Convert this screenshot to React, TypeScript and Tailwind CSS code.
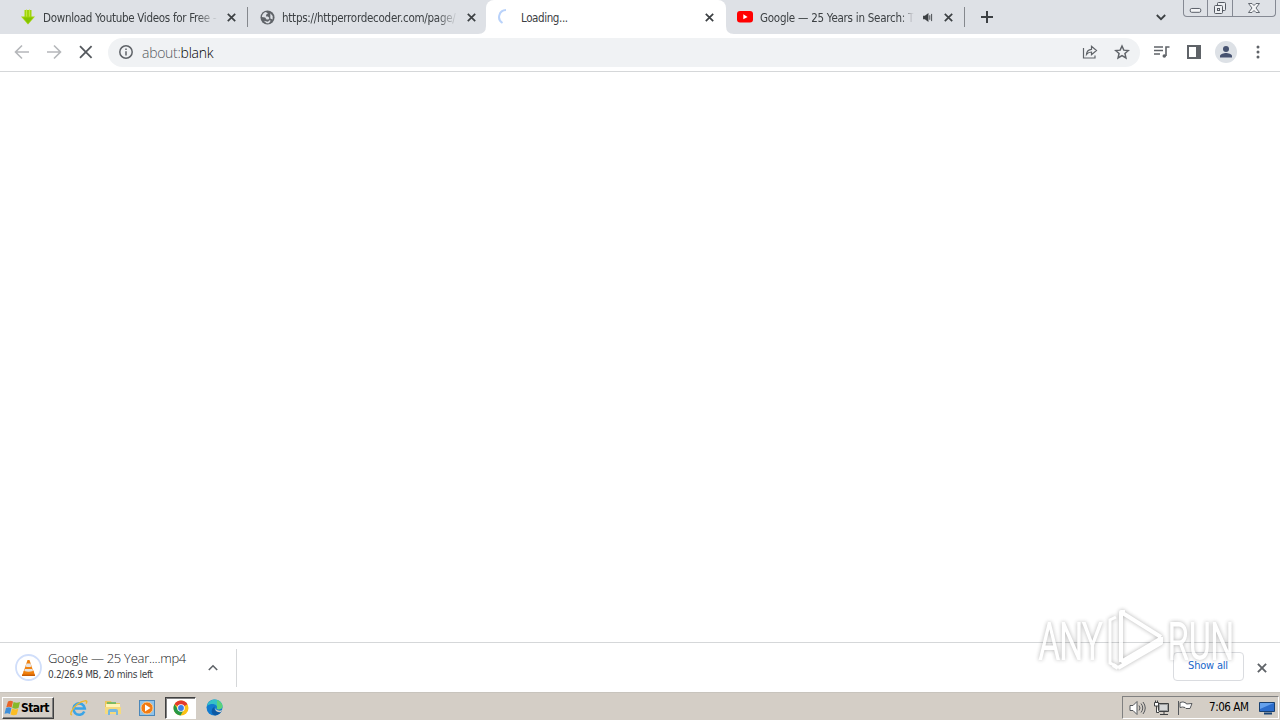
import { PropsWithChildren, ReactNode } from 'react';

const CloseIcon = ({ className = '' }: { className?: string }) => (
    <svg className={`h-[9px] w-[9px] shrink-0 ${className}`} viewBox="0 0 9 9" fill="none" stroke="currentColor" strokeWidth="1.7">
        <path d="M.8.8l7.4 7.4M8.2.8L.8 8.2" />
    </svg>
);

const Tab = ({ icon, title, titleClass, children }: PropsWithChildren<{ icon: ReactNode; title: string; titleClass: string }>) => (
    <>
        <span className="flex w-4 shrink-0 items-center justify-center">{icon}</span>
        <span className={`ml-[7px] shrink-0 whitespace-nowrap pt-px text-[11.5px] leading-4 ${titleClass}`}>{title}</span>
        {children}
    </>
);

const fade = '[mask-image:linear-gradient(to_right,black_88%,transparent)]';

function TabStrip() {
    return (
        <div className="flex h-[34px] bg-[#dee1e6] text-[#3c4043]">
            <div className="flex w-[486px] items-center">
                <div className="flex h-full w-[247px] items-center pl-5">
                    <Tab
                        title="Download Youtube Videos for Free -"
                        titleClass={`w-[175px] tracking-[-0.29px] ${fade}`}
                        icon={
                            <svg width="16" height="16" viewBox="0 0 16 16">
                                <path d="M4.500 1v6.500H1L8 15.500l7-8h-3.500V1z" fill="#a1d50b" />
                                <path d="M3 8.500h10l-5 6z" fill="#84c400" />
                                <path d="M6.500 .500v7M9.500 .500v7" stroke="#c0e83f" />
                            </svg>
                        }
                    >
                        <CloseIcon className="ml-[9px]" />
                    </Tab>
                </div>
                <span className="h-5 w-px bg-[#85888d]" />
                <div className="flex h-full flex-1 items-center pl-[11px]">
                    <Tab
                        title="https://httperrordecoder.com/page/"
                        titleClass={`w-[176px] tracking-[-0.26px] ${fade}`}
                        icon={
                            <svg width="15" height="15" viewBox="0 0 16 16">
                                <circle cx="8" cy="8" r="7.5" fill="#5f6368" />
                                <path d="M6 2.200C3.500 3 2.200 5 2 7.500L5.500 8l1.500 2h2l1-1.500L8.500 7H6.500V5L8.500 3.500zM11 3.500l2.500 3v3.500L11 9z" fill="#dee1e6" />
                                <path d="M4 11.500l4.500 1 1.500-1.500 1.500.5L9.500 14H7z" fill="#dee1e6" />
                            </svg>
                        }
                    >
                        <CloseIcon className="ml-[9px]" />
                    </Tab>
                </div>
            </div>
            <div className="relative flex w-[240px] items-center rounded-t-lg bg-white pl-3">
                <svg className="absolute bottom-0 -left-2" width="8" height="8" viewBox="0 0 8 8">
                    <path d="M8 0v8H0q8 0 8-8" fill="#fff" />
                </svg>
                <svg className="absolute -right-2 bottom-0" width="8" height="8" viewBox="0 0 8 8">
                    <path d="M0 0v8h8q-8 0-8-8" fill="#fff" />
                </svg>
                <Tab
                    title="Loading..."
                    titleClass="w-[175px] tracking-[-0.4px]"
                    icon={
                        <svg width="16" height="16" viewBox="0 0 16 16" fill="none" stroke="#b9d2fa" strokeWidth="2">
                            <path d="M8 1a7 7 0 0 0-3.5 13" />
                        </svg>
                    }
                >
                    <CloseIcon className="ml-[9px]" />
                </Tab>
            </div>
            <div className="flex w-[238px] items-center pl-[11px]">
                <Tab
                    title="Google — 25 Years in Search: Th"
                    titleClass={`w-[157px] tracking-[-0.25px] [mask-image:linear-gradient(to_right,black_90%,transparent_98%)]`}
                    icon={
                        <svg width="16" height="12" viewBox="0 0 16 12">
                            <rect width="16" height="11.5" rx="3" fill="#f00" />
                            <path d="M6.3 3.3v5L10.6 6z" fill="#fff" />
                        </svg>
                    }
                >
                    <svg className="ml-[6px] shrink-0" width="10" height="9" viewBox="0 0 11 10">
                        <path d="M0 3h2l4-3v10L2 7H0z" fill="#3c4043" />
                        <path d="M7.5 2.5v5M9.5 1v8" stroke="#3c4043" />
                    </svg>
                    <CloseIcon className="ml-[11px]" />
                </Tab>
            </div>
            <div className="flex items-center">
                <span className="h-5 w-px bg-[#85888d]" />
                <svg className="ml-4" width="12" height="12" viewBox="0 0 12 12" stroke="#3c4043" strokeWidth="2">
                    <path d="M6 0v12M0 6h12" />
                </svg>
            </div>
            <div className="ml-auto flex pr-1">
                <svg className="mt-[14px] mr-[17px]" width="10" height="7" viewBox="0 0 10 7" fill="none" stroke="#3c4043" strokeWidth="1.8">
                    <path d="M.8 1L5 5.2 9.2 1" />
                </svg>
                <div className="flex h-[17px] w-[93px] rounded-b-[4px] border border-t-0 border-[#858993] text-[#555a63]">
                    <span className="flex w-6 justify-center border-r border-[#858993]">
                        <svg width="24" height="16" viewBox="0 0 24 16" fill="#f3f4f6" stroke="currentColor">
                            <rect x="6.5" y="8.5" width="11" height="4" rx="1.5" />
                        </svg>
                    </span>
                    <span className="flex w-[25px] justify-center border-r border-[#858993]">
                        <svg width="24" height="16" viewBox="0 0 24 16" fill="#eceef1" stroke="currentColor">
                            <rect x="9.5" y="2.5" width="8" height="8" rx="1" />
                            <rect x="6.5" y="5.5" width="8" height="8" rx="1" />
                            <rect x="9.5" y="8.5" width="2" height="2" />
                        </svg>
                    </span>
                    <span className="flex flex-1 justify-center">
                        <svg width="14" height="16" viewBox="0 0 14 16" fill="#f3f4f6" stroke="currentColor" strokeWidth=".9">
                            <path d="M1.500 3.500H5l2 2 2-2h3.500L9 8l3.500 4.500H9l-2-2-2 2H1.500L5 8z" />
                        </svg>
                    </span>
                </div>
            </div>
        </div>
    );
}

function Toolbar() {
    return (
        <div className="flex h-[38px] items-center border-b border-[#d5d7d9] bg-white text-[#5f6368]">
            <svg className="mb-[2px] ml-[14px]" width="80" height="16" viewBox="0 0 80 16" fill="none" strokeWidth="1.6">
                <path d="M15 8H2M8 1.500L1.500 8 8 14.500M33 8h13M40 1.500L46.500 8 40 14.500" stroke="#b5b7ba" />
                <path d="M66 2.200L77.600 13.800M77.600 2.200L66 13.800" stroke="#55595e" strokeWidth="1.800" />
            </svg>
            <div className="ml-[14px] flex h-[29px] w-[1032px] items-center rounded-full bg-[#f0f2f4] pr-[10px] pl-[11px]">
                <svg className="mb-px" width="14" height="14" viewBox="0 0 14 14" fill="none" stroke="currentColor" strokeWidth="1.5">
                    <circle cx="7" cy="7" r="6.200" />
                    <path d="M7 6.200v4.200M7 3.400v1.500" />
                </svg>
                <span className="ml-[9px] font-['Open_Sans',sans-serif] text-[14px] leading-5 font-light tracking-[-0.28px] text-[#55595e]">
                    about:<span className="text-black">blank</span>
                </span>
                <svg className="mb-[2px] ml-auto" width="16" height="15" viewBox="0 0 16 15" fill="none" stroke="currentColor" strokeWidth="1.200">
                    <path d="M1.500 4v10H13v-2.500M4.500 10.500c.3-3.500 2-5 5-5.200V2.200L14.500 6.500l-5 4.200V8c-2.200 0-3.600.6-5 2.500z" />
                </svg>
                <svg className="mb-[2px] ml-[16px]" width="16" height="16" viewBox="0 0 24 24" fill="none" stroke="currentColor" strokeWidth="2.200">
                    <path d="M12 3l2.700 6.200 6.800.6-5.100 4.500 1.500 6.600L12 17.400l-5.900 3.500 1.500-6.600L2.500 9.800l6.800-.6z" />
                </svg>
            </div>
            <svg className="mb-[2px] ml-[13px]" width="17" height="14" viewBox="0 0 17 14" fill="none" stroke="currentColor" strokeWidth="1.600">
                <path d="M1 2h9M1 5.500h9M1 9h6M13 11V2h3.500" />
                <circle cx="11.300" cy="11" r="1.800" fill="currentColor" stroke="none" />
            </svg>
            <svg className="mb-[2px] ml-[17px]" width="14" height="14" viewBox="0 0 14 14">
                <rect x="1" y="1" width="12" height="12" fill="none" stroke="currentColor" strokeWidth="2" />
                <path d="M9 1h4v12H9z" fill="currentColor" />
            </svg>
            <svg className="mb-[2px] ml-[14px]" width="22" height="22" viewBox="0 0 22 22">
                <circle cx="11" cy="11" r="11" fill="#dde1e6" />
                <circle cx="11" cy="8" r="3" fill="#465270" />
                <path d="M5 16.500v-1.500c0-2 4-3 6-3s6 1 6 3v1.500z" fill="#465270" />
            </svg>
            <svg className="mb-px ml-[19px]" width="4" height="14" viewBox="0 0 4 14" fill="currentColor">
                <circle cx="2" cy="2" r="1.500" />
                <circle cx="2" cy="7" r="1.500" />
                <circle cx="2" cy="12" r="1.500" />
            </svg>
        </div>
    );
}

function DownloadShelf() {
    return (
        <div className="flex h-[50px] items-center border-t border-[#d5d7d9] bg-white">
            <svg className="ml-[15px] shrink-0" width="27" height="27" viewBox="0 0 27 27">
                <circle cx="13.500" cy="13.500" r="12.500" fill="none" stroke="#d0defa" strokeWidth="1.800" />
                <path d="M9 16.500h9.500l1.500 5H7z" fill="#ef7c0b" />
                <path d="M12.500 6h2l4 12q-5 2.500-10 0z" fill="#f0820f" />
                <path d="M11.500 9.500h4l1 3q-3 1-6 0zM10 15h7.300l.7 2q-4.500 1.500-8.700 0z" fill="#e6e3e1" />
                <path d="M7 20.500h13v1.500H7z" fill="#c95c05" />
            </svg>
            <div className="mb-[2px] ml-[6px] w-[141px] whitespace-nowrap">
                <div className="font-['Open_Sans',sans-serif] text-[13px] leading-[17px] font-light tracking-[-0.28px] text-[#202124]">
                    Google — 25 Year....mp4
                </div>
                <div className="text-[10px] leading-4 tracking-[-0.34px] text-[#3c4043]">0.2/26.9 MB, 20 mins left</div>
            </div>
            <svg className="ml-[19px]" width="10" height="7" viewBox="0 0 10 7" fill="none" stroke="#5f6368" strokeWidth="1.600">
                <path d="M.8 6L5 1.800 9.200 6" />
            </svg>
            <span className="ml-[18px] h-[38px] w-px bg-[#d5d7d9]" />
            <button className="mb-[2px] ml-auto flex h-[29px] w-[71px] items-center justify-center rounded-[4px] border border-[#dadce0] pr-px pb-px text-[11px] tracking-[-0.2px] text-[#1967c9]">
                Show all
            </button>
            <CloseIcon className="mr-[13px] ml-[13px] h-[10px] w-[10px] text-[#5f6368]" />
        </div>
    );
}

const WindowsFlag = () => (
    <svg width="17" height="16" viewBox="0 0 17 16">
        <path d="M4 1.500q2.500-1.500 5 0L7.600 7.500q-2.500-1.500-5.300-.2z" fill="#e86427" />
        <path d="M9.600 2q3 1.500 6.400 0L14.500 8q-3 1.500-6.300-.2z" fill="#86b928" />
        <path d="M2 8q3-1.500 5.400.2L6 14q-2.500-1.500-5.500-.2z" fill="#3e8fda" />
        <path d="M8 8.600q3 1.500 6.300.2L12.800 14.500q-3 1.500-6.200 0z" fill="#fbbd24" />
    </svg>
);

function Taskbar() {
    return (
        <div className="flex h-7 items-center border-t border-[#c8c4bd] bg-[#d4cec6] pt-[2px] text-black">
            <button className="ml-[2px] flex h-[22px] w-[52px] items-center border border-t-white border-r-[#404040] border-b-[#404040] border-l-white pl-px shadow-[inset_-1px_-1px_#808080]">
                <WindowsFlag />
                <span className="pt-px text-[12px] font-bold tracking-[-0.55px]">Start</span>
            </button>
            <div className="ml-[16px] flex items-center">
                <svg width="18" height="18" viewBox="0 0 18 18" fill="none">
                    <path d="M14.300 12.500A5.700 5.700 0 1 1 14.800 9.500H5" stroke="#3ba4e6" strokeWidth="2.600" />
                    <path d="M2 15.500C-.5 17 1 10 7 5.500s12-5 9-.8" stroke="#efb82e" strokeWidth="1.400" />
                </svg>
                <svg className="ml-[16px]" width="18" height="17" viewBox="0 0 18 17">
                    <path d="M1 2h6l1 2h8v11H1z" fill="#e9c65c" />
                    <path d="M2 5h14v4H2z" fill="#fff4b8" />
                    <path d="M3 4h9" stroke="#5ab45d" strokeWidth="1.500" />
                    <path d="M1 8h16v7H1z" fill="#f5da7d" />
                    <path d="M4 16v-4q0-2 2-2h6q2 0 2 2v4h-2v-3H6v3z" fill="#75b8e0" />
                </svg>
                <svg className="ml-[17px]" width="16" height="16" viewBox="0 0 16 16">
                    <rect x=".5" y=".5" width="15" height="15" fill="#8fc3ea" stroke="#4b87b9" />
                    <circle cx="8" cy="8" r="6" fill="#f27b13" stroke="#fbcc92" />
                    <path d="M6 4.500v7L11.500 8z" fill="#fff" />
                </svg>
                <span className="ml-[10px] flex h-[22px] w-[31px] items-center justify-center border border-t-[#404040] border-r-white border-b-white border-l-[#404040] bg-white shadow-[inset_1px_1px_#808080]">
                    <svg width="16" height="16" viewBox="0 0 16 16">
                        <circle cx="8" cy="8" r="7.500" fill="#fbc116" />
                        <path d="M8 8L1.500 4.200A7.500 7.500 0 0 1 14.500 4.200z" fill="#e33b2e" />
                        <path d="M1.500 4.200A7.500 7.500 0 0 0 7.500 15.500L11 9.500 5 9.500z" fill="#279847" />
                        <circle cx="8" cy="8" r="3.800" fill="#fff" />
                        <circle cx="8" cy="8" r="2.900" fill="#3d7fea" />
                    </svg>
                </span>
                <svg className="ml-[10px]" width="17" height="17" viewBox="0 0 17 17">
                    <circle cx="8.500" cy="8.500" r="8" fill="#127bcf" />
                    <path d="M1 7C2 2 6 .5 9 .5c5 0 8 4 7.500 7-.5 2.500-3.500 3.500-6 2.300C13 6 6 3 1 7z" fill="#36c1c7" />
                    <path d="M11 1q6 3 5.500 7c-.5 2.200-3.500 3-5.500 2z" fill="#5bd27b" />
                    <path d="M9 7.500c-2 2 0 6 6.500 4.500-1 2-3 4-6 4.500-5-1-5-7-.5-9z" fill="#0c59a4" />
                    <path d="M9.500 7.500q-1 3 3 4 2 .5 4-.8L15 13Q8 14 9.500 7.500z" fill="#d4cec6" />
                </svg>
            </div>
            <div className="mr-px ml-auto flex h-[23px] w-[157px] items-center border border-t-[#808080] border-r-white border-b-white border-l-[#808080] pl-[6px]">
                <svg width="17" height="16" viewBox="0 0 17 16" fill="none" stroke="#55585c">
                    <path d="M1 5.500h3l4-4v13l-4-4H1z" fill="#fff" />
                    <path d="M10 5.500q2 2.500 0 5M12 3.500q3.500 4.500 0 9M14 2q4.500 6 0 12" />
                </svg>
                <svg className="ml-[7px]" width="17" height="16" viewBox="0 0 17 16">
                    <path d="M5.500 3.500h10v8h-10zM7 14.500h8M11 12v2" fill="#9b9d9e" stroke="#3f4142" />
                    <path d="M7 5h7v5H7z" fill="#d5d7d8" />
                    <path d="M1.500 2.500h4V6h-4zM2.500 .500v2M4.500 .500v2M3.500 6v6.500H6" fill="#fff" stroke="#3f4142" />
                </svg>
                <svg className="ml-[7px]" width="17" height="16" viewBox="0 0 17 16" fill="#fff" stroke="#55585c">
                    <path d="M1.500 1v14M3 2.500q3-1.500 6 .5l.5 1 5.500-.5-2 5H9l-1-1q-2.500-1-5 0z" />
                </svg>
                <span className="ml-[15px] w-[42px] pt-px text-[11.5px] tracking-[-0.45px] whitespace-nowrap">7:06 AM</span>
                <svg className="ml-[8px]" width="16" height="14" viewBox="0 0 16 14">
                    <path d="M.5 1.500h15v9H.5z" fill="#2c6dcc" stroke="#194070" />
                    <path d="M1 2h14L1 8z" fill="#65a1ed" />
                    <path d="M5 12.500h8" stroke="#184375" strokeWidth="2" />
                </svg>
            </div>
        </div>
    );
}

function Watermark() {
    return (
        <svg
            className="pointer-events-none absolute top-[602px] left-[1030px] opacity-80 drop-shadow-[0_0_2px_rgba(0,0,0,0.38)]"
            width="214"
            height="78"
            viewBox="0 0 214 78"
            fill="none"
            stroke="#fff"
        >
            <g fontFamily="Roboto, sans-serif" fontSize="50" fontWeight="300" fill="#fff" strokeWidth="1.800">
                <text transform="translate(9 57) scale(.68 1)" textLength="93" lengthAdjust="spacingAndGlyphs">ANY</text>
                <text transform="translate(138 57) scale(.68 1)" textLength="97" lengthAdjust="spacingAndGlyphs">RUN</text>
            </g>
            <path d="M91 60V10l40 25M91 18v-8l4 0M88 66l43-25v-6M91 60l39-23M88 66l-5-3" strokeWidth="4" strokeLinejoin="round" />
            <path d="M86 15l-6 3v43l6 3" strokeWidth="3" />
        </svg>
    );
}

export default function App() {
    return (
        <div className="relative flex h-[720px] w-[1280px] flex-col overflow-hidden bg-white font-['DejaVu_Sans_Condensed','DejaVu_Sans',sans-serif]">
            <TabStrip />
            <Toolbar />
            <main className="flex-1 bg-white" />
            <DownloadShelf />
            <Taskbar />
            <Watermark />
        </div>
    );
}
